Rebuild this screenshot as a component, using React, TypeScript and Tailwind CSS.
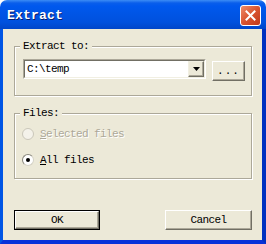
import React from 'react';

const face = 'bg-[#ECE9D8]';
const mono = "font-['Liberation_Mono','DejaVu_Sans_Mono',monospace] text-[11px] leading-[12px] tracking-[-0.6px]";

function Radio({ label, hot, checked, disabled }: { label: string; hot: string; checked?: boolean; disabled?: boolean }) {
  const rest = label.slice(1);
  return (
    <div className="flex items-center h-[16px] gap-[6px]">
      <div
        className={`w-[12px] h-[12px] rounded-full border flex items-center justify-center ${
          disabled
            ? 'border-[#CAC7BA] bg-[#F4F2EA]'
            : 'border-t-[#8A887E] border-l-[#8A887E] border-r-[#D5D2C6] border-b-[#D5D2C6] bg-white'
        }`}
      >
        {checked && <div className="w-[4px] h-[4px] rounded-full bg-black" />}
      </div>
      <span className={disabled ? 'text-[#ACA899] [text-shadow:1px_1px_0_#fff]' : 'text-black'}>
        <span className="underline underline-offset-[1px]">{hot}</span>
        {rest}
      </span>
    </div>
  );
}

function Button({ children, isDefault, className }: { children: React.ReactNode; isDefault?: boolean; className?: string }) {
  return (
    <button
      className={`h-[20px] ${isDefault ? 'border border-black' : ''} ${className ?? ''}`}
    >
      <div className="h-full w-full border border-t-white border-l-white border-r-[#716F64] border-b-[#716F64] shadow-[inset_-1px_-1px_0_#ACA899] flex items-center justify-center text-black">
        {children}
      </div>
    </button>
  );
}

export default function App() {
  return (
    <div className={`w-[266px] h-[244px] flex flex-col ${mono}`}>
      <div className="h-[29px] rounded-t-[7px] bg-[linear-gradient(to_bottom,#3C8CF5_0px,#0A5EEB_3px,#0058EE_6px,#0055E5_14px,#0051DE_22px,#0046C9_29px)] flex items-center justify-between pl-[7px] pr-[5px]">
        <span className="text-white font-bold text-[13px] leading-[14px] tracking-[0.2px] pt-[2px] [text-shadow:1px_1px_0_#0A1E6A]">
          Extract
        </span>
        <div className="w-[21px] h-[21px] rounded-[3px] border border-white bg-[linear-gradient(135deg,#EE8C6A,#D9542F_50%,#C0381A)] flex items-center justify-center mt-[1px]">
          <svg width="11" height="11" viewBox="0 0 11 11">
            <path d="M1.5 1.5 L9.5 9.5 M9.5 1.5 L1.5 9.5" stroke="white" strokeWidth="2" strokeLinecap="square" />
          </svg>
        </div>
      </div>
      <div className={`flex-1 ${face} border-l-[3px] border-r-[4px] border-b-[4px] border-l-[#0055E5] border-r-[#0030C0] border-b-[#0831D9] flex flex-col pl-[11px] pr-[10px]`}>
        <fieldset className="mt-[11px] border border-[#ACA899] rounded-none shadow-[inset_1px_1px_0_#fff,1px_1px_0_#fff] pb-[14px]">
          <legend className={`ml-[5px] px-[3px] ${face} text-black`}>Extract to:</legend>
          <div className="flex ml-[8px] mt-[7px] gap-[6px]">
            <div className="w-[183px] h-[20px] border border-t-[#ACA899] border-l-[#ACA899] border-r-white border-b-white">
              <div className="h-full w-full border border-t-[#716F64] border-l-[#716F64] border-r-[#F1EFE2] border-b-[#F1EFE2] bg-white flex items-center">
                <span className="flex-1 pl-[2px] text-black">C:\temp</span>
                <div className={`w-[16px] h-full ${face} border border-t-[#F1EFE2] border-l-[#F1EFE2] border-r-[#716F64] border-b-[#716F64] shadow-[inset_-1px_-1px_0_#ACA899] flex items-center justify-center`}>
                  <svg width="7" height="4" viewBox="0 0 7 4">
                    <path d="M0 0 H7 L3.5 4 Z" fill="black" />
                  </svg>
                </div>
              </div>
            </div>
            <Button className="w-[33px] mt-[2px] h-[18px]">
              <span className="tracking-[1px]">...</span>
            </Button>
          </div>
        </fieldset>
        <fieldset className="mt-[11px] border border-[#ACA899] rounded-none shadow-[inset_1px_1px_0_#fff,1px_1px_0_#fff] pb-[10px]">
          <legend className={`ml-[5px] px-[3px] ${face} text-black`}>Files:</legend>
          <div className="flex flex-col ml-[7px] mt-[7px] gap-[10px]">
            <Radio label="Selected files" hot="S" disabled />
            <Radio label="All files" hot="A" checked />
          </div>
        </fieldset>
        <div className="flex justify-between mt-[31px]">
          <Button isDefault className="w-[86px]">OK</Button>
          <Button className="w-[87px]">Cancel</Button>
        </div>
      </div>
    </div>
  );
}
